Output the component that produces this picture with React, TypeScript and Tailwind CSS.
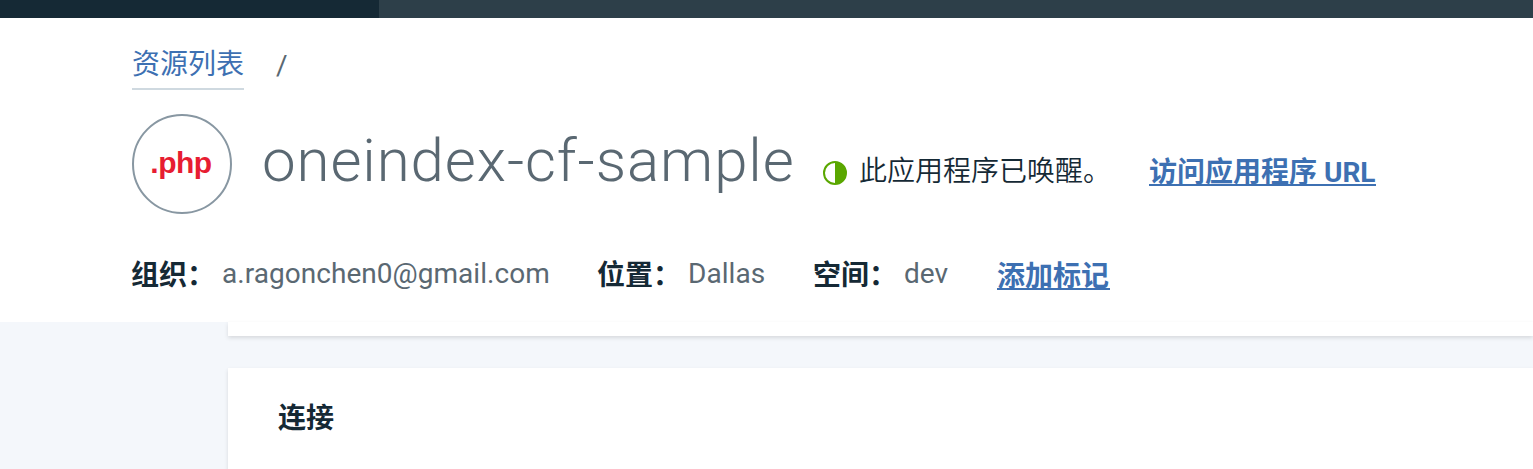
const cjk = "font-['Roboto','Noto_Sans_CJK_SC',sans-serif]";

function Field({ label, value, width }: { label: string; value: string; width: string }) {
  return (
    <div className={`flex ${width}`}>
      <span className="-ml-px w-[91px] shrink-0 font-['Noto_Sans_CJK_SC',sans-serif] font-bold text-[#152935]">{label}</span>
      <span className="whitespace-nowrap pt-px font-['Roboto',sans-serif] tracking-[0.04px] text-[#5a6872]">{value}</span>
    </div>
  );
}

function StatusIcon() {
  return (
    <svg className="mt-[2px] h-6 w-6 shrink-0" viewBox="0 0 24 24">
      <circle cx="12" cy="12" r="11" fill="#fff" stroke="#5aa700" strokeWidth="2" />
      <path d="M12 1a11 11 0 0 1 0 22z" fill="#5aa700" />
    </svg>
  );
}

export default function App() {
  return (
    <div className={`h-[469px] w-full overflow-hidden bg-[#f4f7fb] text-[28px] leading-10 ${cjk}`}>
      <div className="flex h-[18px] bg-[#2d3f49]">
        <div className="w-[379px] bg-[#152935]" />
      </div>
      <header className="h-[304px] bg-white pl-[132px] pt-[25px]">
        <nav className="flex h-[47px]">
          <a className="w-28 whitespace-nowrap border-b-2 border-[#cfd9e0] pt-[2px] text-[#3d70b2]">资源列表</a>
          <span className="ml-8 pt-[3px] text-[#5a6872]">/</span>
        </nav>
        <div className="mt-6 flex h-[100px]">
          <div className="flex h-[100px] w-[100px] shrink-0 items-center justify-center rounded-full border-2 border-[#8897a2]">
            <span className="-ml-[2px] -mt-[3px] font-['Liberation_Sans',sans-serif] text-[30px] font-bold tracking-[-0.5px] text-[#e71d32]">.php</span>
          </div>
          <h1 className="ml-[30px] w-[561px] shrink-0 whitespace-nowrap pt-[7px] font-['Roboto',sans-serif] text-[60px] font-light leading-[80px] tracking-[0.9px] text-[#5a6872]">
            oneindex-cf-sample
          </h1>
          <div className="mt-[38px] flex h-10 w-[326px] shrink-0 items-center">
            <StatusIcon />
            <span className="ml-3 whitespace-nowrap font-[350] text-[#152935]">此应用程序已唤醒。</span>
          </div>
          <a className="mt-[37px] h-[35px] whitespace-nowrap border-b-2 border-[#3d70b2] pt-[2px] font-bold text-[#3d70b2]">访问应用程序 URL</a>
        </div>
        <div className="mt-[39px] flex">
          <Field label="组织：" value="a.ragonchen0@gmail.com" width="w-[466px]" />
          <Field label="位置：" value="Dallas" width="w-[216px]" />
          <Field label="空间：" value="dev" width="w-[183px]" />
          <a className="mt-[1px] h-[36px] w-[113px] border-b-2 border-[#3d70b2] pt-[3px] font-bold text-[#3d70b2]">添加标记</a>
        </div>
      </header>
      <main className="pl-[228px]">
        <section className="h-[14px] bg-white shadow-[0_2px_4px_rgba(0,0,0,0.12)]" />
        <section className="mt-8 h-[120px] bg-white pl-[50px] pt-[31px] shadow-[0_2px_4px_rgba(0,0,0,0.12)]">
          <h2 className="font-bold text-[#152935]">连接</h2>
        </section>
      </main>
    </div>
  );
}
